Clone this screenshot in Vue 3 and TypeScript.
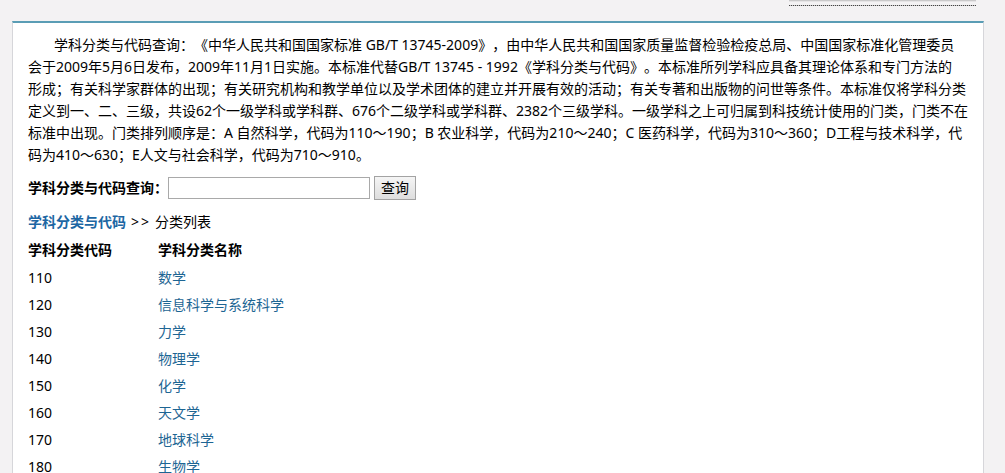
<script setup lang="ts">
import { ref } from 'vue'

interface Subject {
  code: string
  name: string
}

const keyword = ref('')

const intro: string[] = [
  '学科分类与代码查询：《中华人民共和国国家标准 GB/T 13745-2009》，由中华人民共和国国家质量监督检验检疫总局、中国国家标准化管理委员',
  '会于2009年5月6日发布，2009年11月1日实施。本标准代替GB/T 13745 - 1992《学科分类与代码》。本标准所列学科应具备其理论体系和专门方法的',
  '形成；有关科学家群体的出现；有关研究机构和教学单位以及学术团体的建立并开展有效的活动；有关专著和出版物的问世等条件。本标准仅将学科分类',
  '定义到一、二、三级，共设62个一级学科或学科群、676个二级学科或学科群、2382个三级学科。一级学科之上可归属到科技统计使用的门类，门类不在',
  '标准中出现。门类排列顺序是：A 自然科学，代码为110～190；B 农业科学，代码为210～240；C 医药科学，代码为310～360；D工程与技术科学，代',
  '码为410～630；E人文与社会科学，代码为710～910。',
]

const subjects: Subject[] = [
  { code: '110', name: '数学' },
  { code: '120', name: '信息科学与系统科学' },
  { code: '130', name: '力学' },
  { code: '140', name: '物理学' },
  { code: '150', name: '化学' },
  { code: '160', name: '天文学' },
  { code: '170', name: '地球科学' },
  { code: '180', name: '生物学' },
]
</script>

<template>
  <div class="page">
    <div class="top"><div class="top-box"></div></div>
    <main class="panel">
      <p class="intro">
        <span v-for="(line, i) in intro" :key="i" class="line">{{ line }}</span>
      </p>
      <form class="search" @submit.prevent>
        <label for="keyword">学科分类与代码查询：</label>
        <input id="keyword" v-model="keyword" type="text" />
        <button type="submit">查询</button>
      </form>
      <nav class="crumbs">
        <a class="root" href="#">学科分类与代码</a>
        <span class="sep"><span>&gt;</span><span>&gt;</span></span>
        <span>分类列表</span>
      </nav>
      <table>
        <thead>
          <tr>
            <th class="code" scope="col">学科分类代码</th>
            <th scope="col">学科分类名称</th>
          </tr>
        </thead>
        <tbody>
          <tr v-for="s in subjects" :key="s.code">
            <td>{{ s.code }}</td>
            <td><a href="#">{{ s.name }}</a></td>
          </tr>
        </tbody>
      </table>
    </main>
  </div>
</template>

<style>
html {
  background: #f3f2f3;
}
body {
  margin: 0;
  overflow: hidden;
}
</style>

<style scoped>
.page {
  box-sizing: border-box;
  padding: 0 21px 0 12px;
  font: 14px/22px "Noto Sans", "Noto Sans CJK SC", sans-serif;
  color: #000;
  text-spacing-trim: space-all;
}
.top {
  display: flex;
  justify-content: flex-end;
  height: 21px;
  padding-right: 8px;
}
.top-box {
  box-sizing: border-box;
  width: 187px;
  height: 6px;
  border-bottom: 1px dotted #444;
  background: linear-gradient(#bbb, #f3f2f3 2px);
}
.panel {
  box-sizing: border-box;
  padding: 11px 12px 0 15px;
  border: 1px solid #d6d6da;
  border-top: 2px solid #5a9db5;
  border-bottom: 0;
  background: #fff;
}
.intro {
  margin: 0;
  padding-bottom: 10px;
}
.line {
  display: block;
  white-space: nowrap;
}
.line:first-child {
  text-indent: 26px;
}
.search {
  display: flex;
  align-items: center;
  height: 24px;
}
label {
  font-weight: bold;
}
input {
  box-sizing: border-box;
  width: 202px;
  height: 22px;
  margin: 0 4px 0 0;
  padding: 1px 3px;
  border: 1px solid #a9a9a9;
  background: #fff;
  font: inherit;
}
button {
  box-sizing: border-box;
  width: 42px;
  height: 24px;
  padding: 0;
  border: 1px solid #a3a3a3;
  background: linear-gradient(#f5f5f5, #dedede);
  color: #000;
  font: inherit;
}
.crumbs {
  display: flex;
  gap: 5px;
  padding: 11px 0 3px;
}
.sep {
  display: flex;
  gap: 2px;
  padding-right: 1px;
}
a {
  color: #1d6593;
  text-decoration: none;
}
.root {
  font-weight: bold;
  color: #1c66a3;
}
table {
  width: 100%;
  border-collapse: collapse;
}
th,
td {
  height: 27px;
  padding: 0;
  text-align: left;
}
th {
  height: 28px;
}
.code {
  width: 130px;
}
</style>
